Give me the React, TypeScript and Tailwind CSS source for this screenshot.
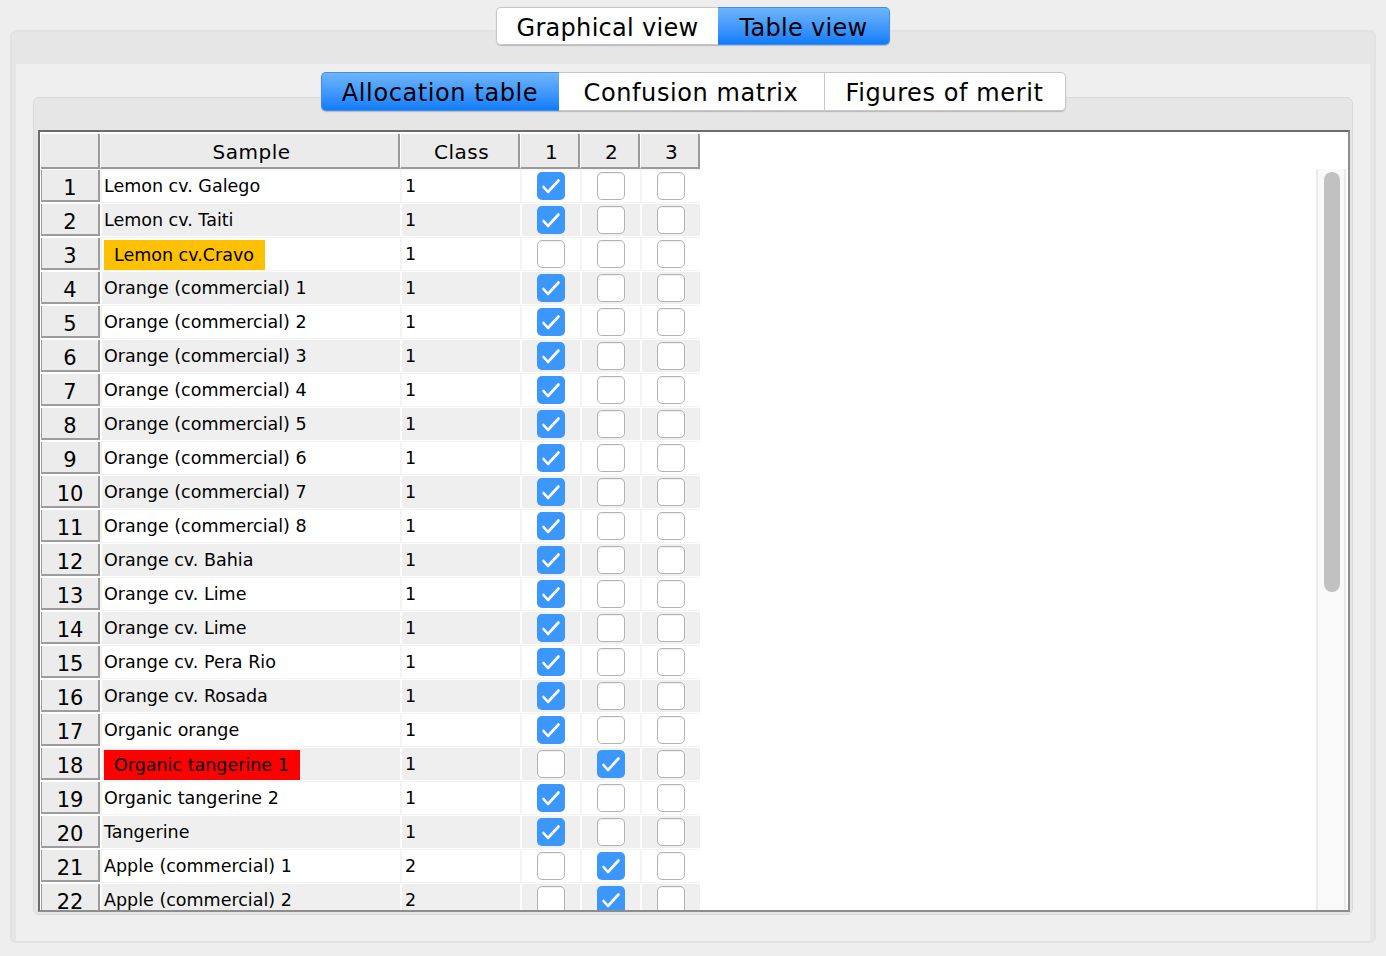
import React from "react";

type Row = {
  name: string;
  cls: number;
  alloc: number | null;
  mark?: "warn" | "error";
};

const ROWS: Row[] = [
  { name: "Lemon cv. Galego", cls: 1, alloc: 1 },
  { name: "Lemon cv. Taiti", cls: 1, alloc: 1 },
  { name: "Lemon cv.Cravo", cls: 1, alloc: null, mark: "warn" },
  { name: "Orange (commercial) 1", cls: 1, alloc: 1 },
  { name: "Orange (commercial) 2", cls: 1, alloc: 1 },
  { name: "Orange (commercial) 3", cls: 1, alloc: 1 },
  { name: "Orange (commercial) 4", cls: 1, alloc: 1 },
  { name: "Orange (commercial) 5", cls: 1, alloc: 1 },
  { name: "Orange (commercial) 6", cls: 1, alloc: 1 },
  { name: "Orange (commercial) 7", cls: 1, alloc: 1 },
  { name: "Orange (commercial) 8", cls: 1, alloc: 1 },
  { name: "Orange cv. Bahia", cls: 1, alloc: 1 },
  { name: "Orange cv. Lime", cls: 1, alloc: 1 },
  { name: "Orange cv. Lime", cls: 1, alloc: 1 },
  { name: "Orange cv. Pera Rio", cls: 1, alloc: 1 },
  { name: "Orange cv. Rosada", cls: 1, alloc: 1 },
  { name: "Organic orange", cls: 1, alloc: 1 },
  { name: "Organic tangerine 1", cls: 1, alloc: 2, mark: "error" },
  { name: "Organic tangerine 2", cls: 1, alloc: 1 },
  { name: "Tangerine", cls: 1, alloc: 1 },
  { name: "Apple (commercial) 1", cls: 2, alloc: 2 },
  { name: "Apple (commercial) 2", cls: 2, alloc: 2 },
];

function Check({ on }: { on: boolean }) {
  if (on) {
    return (
      <svg width="28" height="28" viewBox="0 0 28 28">
        <rect x="0" y="0" width="28" height="28" rx="5" fill="#3b97fc" />
        <path
          d="M6.5 15 L11 20 L21.5 8.5"
          fill="none"
          stroke="white"
          strokeWidth="2.6"
          strokeLinecap="round"
          strokeLinejoin="round"
        />
      </svg>
    );
  }
  return (
    <div className="w-[28px] h-[28px] rounded-[5px] border border-[#b3b3b3] bg-white shadow-[inset_0_1px_1px_rgba(0,0,0,0.06)]" />
  );
}

function HeadCell({ w, label }: { w: string; label: string }) {
  return (
    <div
      className={`${w} h-full flex items-center justify-center pt-[3px] pl-[4px] bg-[#ebebeb] border-l border-white border-r-2 border-b-2 border-r-[#9a9a9a] border-b-[#9a9a9a] text-[20px] tracking-[0.5px]`}
    >
      {label}
    </div>
  );
}

export default function App() {
  return (
    <div className="h-screen w-full overflow-hidden bg-[#eeeeee] font-['DejaVu_Sans',sans-serif] text-black">
      <div className="flex flex-col pt-[7px] px-[10px]">
        {/* view switch */}
        <div className="relative z-10 flex justify-center">
          <div className="flex h-[38px] rounded-[5px] shadow-[0_1px_1px_rgba(0,0,0,0.2)] text-[24px] tracking-[0.3px]">
            <div className="w-[222px] flex items-center justify-center pt-[3px] bg-white border border-r-0 border-[#c8c8c8] rounded-l-[5px]">
              Graphical view
            </div>
            <div className="w-[172px] flex items-center justify-center pt-[3px] bg-linear-to-b from-[#6db5fb] to-[#0b7cfb] border border-l-0 border-[#3d8ef0] rounded-r-[5px]">
              Table view
            </div>
          </div>
        </div>

        {/* outer panel */}
        <div className="-mt-[15px] h-[913px] rounded-[6px] border-2 border-[#e2e2e2] bg-[#e6e6e6] pt-[32px] px-[4px] flex flex-col">
          <div className="flex-1 bg-[#efefef] pt-[8px] pl-[17px]">
            {/* inner tabs */}
            <div className="relative z-10 flex justify-center w-[1320px]">
              <div className="flex h-[39px] rounded-[5px] shadow-[0_1px_1px_rgba(0,0,0,0.2)] text-[24px] tracking-[0.6px]">
                <div className="w-[238px] flex items-center justify-center pt-[3px] bg-linear-to-b from-[#6db5fb] to-[#0b7cfb] border border-r-0 border-[#3d8ef0] rounded-l-[5px]">
                  Allocation table
                </div>
                <div className="w-[266px] flex items-center justify-center pt-[3px] bg-white border border-[#c8c8c8] border-l-0">
                  Confusion matrix
                </div>
                <div className="w-[241px] flex items-center justify-center pt-[3px] bg-white border border-l-0 border-[#c8c8c8] rounded-r-[5px]">
                  Figures of merit
                </div>
              </div>
            </div>

            {/* inner panel */}
            <div className="-mt-[14px] w-[1320px] h-[818px] rounded-[6px] border border-[#d9d9d9] bg-[#e6e6e6] pt-[32px] pl-[4px] pr-[2px] pb-[2px]">
              <div className="h-[782px] w-[1312px] border-2 border-t-[#6c6c6c] border-l-[#6c6c6c] border-r-[#8d8d8d] border-b-[#8d8d8d] bg-white pt-[2px] pl-[1px] pr-[2px] flex flex-col">
                {/* header */}
                <div className="h-[35px] flex shrink-0">
                  <div className="w-[59px] h-full bg-[#ebebeb] border-r-2 border-b-2 border-[#9a9a9a]" />
                  <HeadCell w="w-[300px]" label="Sample" />
                  <HeadCell w="w-[120px]" label="Class" />
                  <HeadCell w="w-[60px]" label="1" />
                  <HeadCell w="w-[60px]" label="2" />
                  <HeadCell w="w-[60px]" label="3" />
                </div>

                {/* body */}
                <div className="flex-1 flex min-h-0">
                  <div className="flex-1 overflow-hidden">
                    {ROWS.map((r, i) => {
                      const even = i % 2 === 1;
                      const cell = even ? "bg-[#efefef]" : "bg-white";
                      const line = even ? "bg-white" : "bg-[#f4f4f4]";
                      return (
                        <div key={i} className="h-[34px] flex">
                          <div className="w-[59px] h-full pt-[1px] pb-[1px] bg-white">
                            <div className="h-full bg-[#ececec] border-l border-r-2 border-b-2 border-[#9c9c9c] flex items-center justify-center pt-[7px] text-[21px]">
                              {i + 1}
                            </div>
                          </div>
                          <div className={`flex h-full py-[1px] gap-[2px] pl-[2px] ${line}`}>
                            <div className={`w-[298px] h-full flex items-center pl-[2px] text-[17.5px] ${cell}`}>
                              {r.mark ? (
                                <span
                                  className={`h-[30px] mt-[2px] flex items-center pl-[10px] pr-[11px] ${
                                    r.mark === "warn" ? "bg-[#ffc000]" : "bg-[#ff0000]"
                                  }`}
                                >
                                  {r.name}
                                </span>
                              ) : (
                                r.name
                              )}
                            </div>
                            <div className={`w-[118px] h-full flex items-center pl-[3px] text-[17.5px] ${cell}`}>
                              {r.cls}
                            </div>
                            {[1, 2, 3].map((c) => (
                              <div key={c} className={`w-[58px] h-full flex items-center justify-center pr-[1px] ${cell}`}>
                                <Check on={r.alloc === c} />
                              </div>
                            ))}
                          </div>
                        </div>
                      );
                    })}
                  </div>
                  {/* scrollbar */}
                  <div className="w-[30px] h-full bg-[#f9f9f9] border-l-2 border-r-2 border-[#ebebeb] pt-[3px] pl-[6px]">
                    <div className="w-[16px] h-[420px] rounded-full bg-[#c1c1c1]" />
                  </div>
                </div>
              </div>
            </div>
          </div>
        </div>
      </div>
    </div>
  );
}
